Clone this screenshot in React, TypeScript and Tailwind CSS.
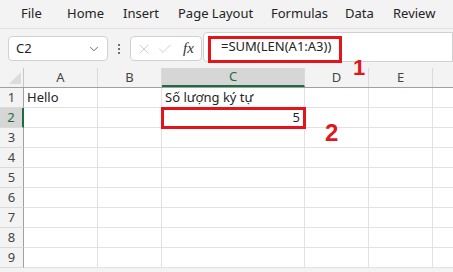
import { ChevronDown, X, Check } from 'lucide-react';

const COLS = [
  { label: 'A', w: 74 },
  { label: 'B', w: 64 },
  { label: 'C', w: 143 },
  { label: 'D', w: 64 },
  { label: 'E', w: 64 },
  { label: '', w: 64 },
];

const ROWS = [1, 2, 3, 4, 5, 6, 7, 8, 9];

const TABS = [
  { label: 'File', w: 46 },
  { label: 'Home', w: 56 },
  { label: 'Insert', w: 55 },
  { label: 'Page Layout', w: 93 },
  { label: 'Formulas', w: 74 },
  { label: 'Data', w: 48 },
  { label: 'Review', w: 60 },
];

function cellText(row: number, col: string) {
  if (row === 1 && col === 'A') return 'Hello';
  if (row === 1 && col === 'C') return 'Số lượng ký tự';
  return '';
}

export default function App() {
  return (
    <div
      className="relative w-[453px] h-[272px] overflow-hidden bg-[#f3f3f3] text-[#242424]"
      style={{ fontFamily: '"Noto Sans", "Open Sans", sans-serif' }}
    >
      {/* Ribbon tabs */}
      <div className="h-[29px] flex items-center pl-[21px] text-[13px] border-b border-[#e3e3e3] whitespace-nowrap">
        {TABS.map((t) => (
          <span key={t.label} style={{ width: t.w }} className="shrink-0">
            {t.label}
          </span>
        ))}
      </div>

      {/* Formula bar */}
      <div className="h-[39px] flex items-start pt-[7px] pl-[8px]">
        <div className="w-[100px] h-[25px] bg-white border border-[#d1d1d1] rounded-[4px] flex items-center justify-between pl-[7px] pr-[6px] text-[13px]">
          <span>C2</span>
          <ChevronDown size={14} strokeWidth={1.5} className="text-[#555]" />
        </div>
        <div className="w-[22px] h-[25px] flex flex-col items-center justify-center gap-[2px]">
          <span className="w-[2px] h-[2px] bg-[#444] rounded-full" />
          <span className="w-[2px] h-[2px] bg-[#444] rounded-full" />
          <span className="w-[2px] h-[2px] bg-[#444] rounded-full" />
        </div>
        <div className="w-[72px] h-[25px] bg-white border border-[#d1d1d1] rounded-[4px] flex items-center pl-[5px] gap-[5px]">
          <X size={16} strokeWidth={1} className="text-[#b5b5b5]" />
          <Check size={16} strokeWidth={1} className="text-[#b5b5b5]" />
          <span
            className="ml-[5px] text-[15px] italic text-[#333]"
            style={{ fontFamily: '"Liberation Serif", serif' }}
          >
            fx
          </span>
        </div>
        <div className="ml-[1px] -mt-[4px] flex-1 h-[30px] bg-white border border-[#d1d1d1] rounded-l-[4px] flex items-center pl-[17px] text-[13px]">
          =SUM(LEN(A1:A3))
        </div>
      </div>

      {/* Column headers */}
      <div className="h-[20px] flex border-b border-[#a0a0a0] text-[13px] text-[#444]">
        <div className="w-[24px] shrink-0 border-r border-[#c6c6c6] relative">
          <div className="absolute right-[2px] bottom-[3px] w-0 h-0 border-l-[12px] border-l-transparent border-b-[12px] border-b-[#dcdcdc]" />
        </div>
        {COLS.map((c, i) => (
          <div
            key={i}
            style={{ width: c.w }}
            className={`shrink-0 flex items-center justify-center border-r border-[#dadada] ${
              c.label === 'C' ? 'bg-[#d6d6d6] border-b-2 border-b-[#1e6c41] text-[#1e6c41]' : ''
            }`}
          >
            {c.label}
          </div>
        ))}
      </div>

      {/* Grid */}
      <div className="flex flex-col">
        {ROWS.map((r) => (
          <div key={r} className="h-[20px] flex text-[13px]">
            <div
              className={`w-[24px] shrink-0 flex items-center justify-center border-b border-[#dadada] ${
                r === 2
                  ? 'bg-[#d6d6d6] border-r-2 border-r-[#1e6c41] text-[#1e6c41]'
                  : 'border-r border-r-[#a0a0a0] text-[#444]'
              }`}
            >
              {r}
            </div>
            {COLS.map((c, i) => (
              <div
                key={i}
                style={{ width: c.w }}
                className="shrink-0 bg-white border-r border-b border-[#e1e1e1] flex items-center px-[3px] whitespace-nowrap overflow-visible"
              >
                {cellText(r, c.label)}
              </div>
            ))}
          </div>
        ))}
      </div>

      {/* Highlight boxes and labels */}
      <div className="absolute left-[208px] top-[36px] w-[134px] h-[27px] border-[3px] border-[#e3151a]" />
      <div className="absolute left-[161px] top-[107px] w-[145px] h-[22px] border-[3px] border-[#e3151a] flex items-center justify-end pr-[3px] text-[13px]">
        5
      </div>
      <div
        className="absolute left-[353px] top-[57px] text-[22px] font-bold text-[#e3151a] leading-none"
        style={{ fontFamily: '"Liberation Sans", sans-serif' }}
      >
        1
      </div>
      <div
        className="absolute left-[325px] top-[121px] text-[24px] font-bold text-[#e3151a] leading-none"
        style={{ fontFamily: '"Liberation Sans", sans-serif' }}
      >
        2
      </div>
    </div>
  );
}
